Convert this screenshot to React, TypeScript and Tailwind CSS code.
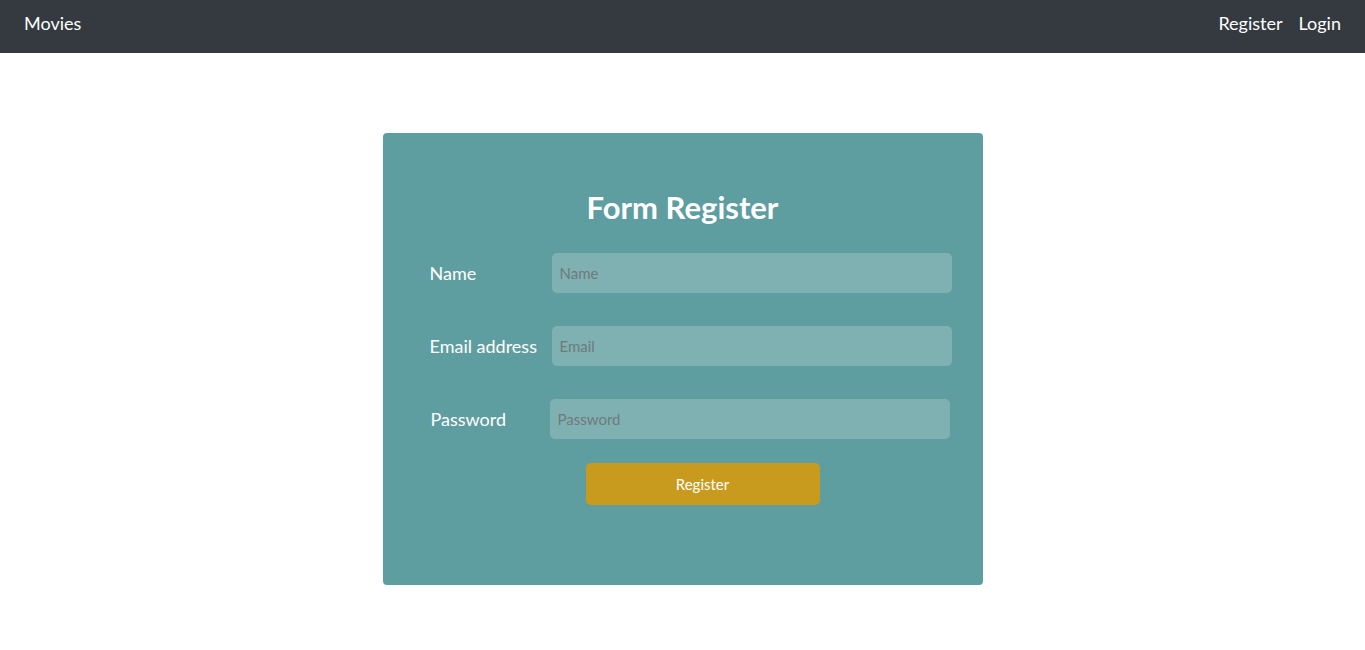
import React from "react";

const FONT = { fontFamily: '"Segoe UI", Lato, "Noto Sans", sans-serif' };

function Row({
  label,
  placeholder,
  type = "text",
  shift = false,
}: {
  label: string;
  placeholder: string;
  type?: string;
  shift?: boolean;
}) {
  return (
    <div className={shift ? "flex items-center pl-px" : "flex items-center"}>
      <label className={(shift ? "w-[119px]" : "w-[122px]") + " text-[18px] text-white"}>{label}</label>
      <input
        type={type}
        placeholder={placeholder}
        className="h-10 w-[400px] rounded-[5px] bg-white/20 px-2 text-[15px] text-gray-700 placeholder:text-[#6f7a7b] outline-none"
      />
    </div>
  );
}

export default function App() {
  return (
    <div className="min-h-[650px] bg-white" style={FONT}>
      <nav className="flex h-[53px] items-center justify-between bg-[#343a40] px-6 pb-[6px]">
        <a className="text-[18px] text-white">Movies</a>
        <div className="flex items-center gap-4 text-[18px] text-white">
          <a>Register</a>
          <a>Login</a>
        </div>
      </nav>

      <div className="flex justify-center pt-20">
        <div className="w-[600px] rounded-[4px] bg-[#5f9ea0] pt-[54px] pb-20">
          <h1 className="text-center text-[31px] font-bold leading-10 text-white">Form Register</h1>
          <div className="mt-[26px] flex flex-col gap-[33px] pl-[47px]">
            <Row label="Name" placeholder="Name" />
            <Row label="Email address" placeholder="Email" type="email" />
            <Row label="Password" placeholder="Password" type="password" shift />
          </div>
          <div className="mt-6 flex">
            <button className="ml-[203px] h-[42px] w-[234px] rounded-[5px] bg-[#c89b1f] text-[15px] text-white">
              Register
            </button>
          </div>
        </div>
      </div>
    </div>
  );
}
